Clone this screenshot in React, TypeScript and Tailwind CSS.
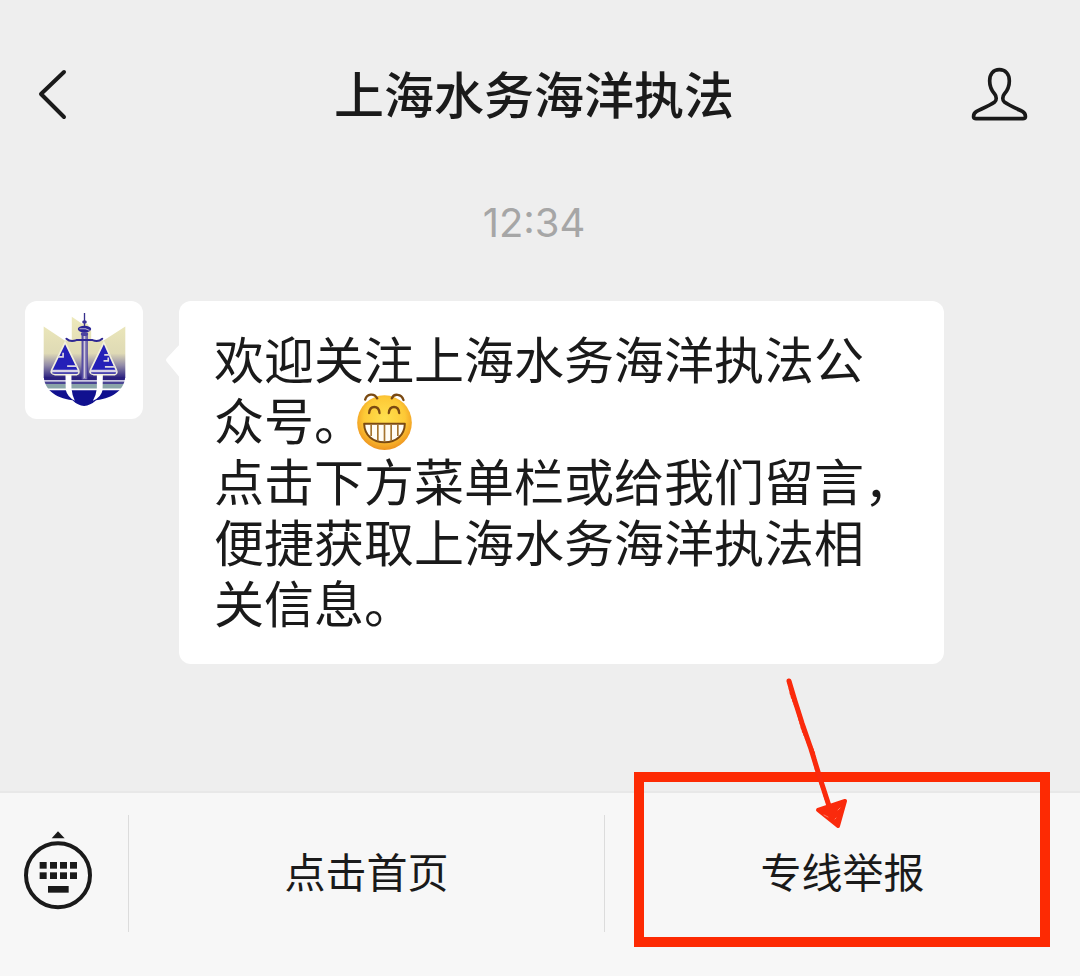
const WELCOME_LINES = [
  "欢迎关注上海水务海洋执法公",
  "众号。",
  "点击下方菜单栏或给我们留言，",
  "便捷获取上海水务海洋执法相",
  "关信息。",
];

function BackIcon() {
  return (
    <svg className="h-[52px] w-[30px]" viewBox="0 0 30 52" fill="none" stroke="#1a1a1a" strokeWidth="4" strokeLinecap="round" strokeLinejoin="round">
      <path d="M26 4 L3 26 L26 49" />
    </svg>
  );
}

function PersonIcon() {
  return (
    <svg className="h-[56px] w-[60px]" viewBox="60 48 180 168" fill="none" stroke="#1a1a1a" strokeWidth="11" strokeLinejoin="round">
      <path d="M148 59 C130 59 119 72 119 93 C119 111 125 122 134 132 C139 138 141 151 134 156 C120 166 96 176 80 184 C71 189 70 195 71 202 Q72 206 78 206 H219 Q225 206 226 202 C227 195 226 189 217 184 C200 176 177 166 163 156 C156 151 158 138 163 132 C172 122 178 111 178 93 C178 72 166 59 148 59 Z" />
    </svg>
  );
}

function KeyboardIcon() {
  return (
    <svg className="h-20 w-[70px]" viewBox="69 150 210 240" fill="#1a1a1a">
      <path d="M155 175 L174 154 L194 175 Z" />
      <circle cx="174" cy="286" r="96" fill="none" stroke="#1a1a1a" strokeWidth="12" />
      {[119, 150, 180, 210].map((x) => (
        <g key={x}>
          <rect x={x} y="246" width="21" height="20" />
          <rect x={x} y="277" width="21" height="20" />
        </g>
      ))}
      <rect x="144" y="318" width="62" height="20" />
    </svg>
  );
}

function GrinEmoji() {
  return (
    <svg className="mb-2 -ml-2 inline-block h-[58px] w-[57px] align-middle" viewBox="48 36 170 174" role="img" aria-label="呲牙">
      <defs>
        <radialGradient id="face" cx="0.5" cy="0.42" r="0.58">
          <stop offset="0" stopColor="#ffe04f" />
          <stop offset="0.65" stopColor="#fdc936" />
          <stop offset="1" stopColor="#ee941f" />
        </radialGradient>
      </defs>
      <circle cx="133" cy="125" r="82" fill="url(#face)" />
      <g fill="none" stroke="#7b4a12" strokeWidth="7" strokeLinecap="round">
        <path d="M75 56 C80 38 102 35 111 52" />
        <path d="M155 52 C161 36 184 38 190 57" />
        <path d="M87 96 C89 72 116 72 118 96" />
        <path d="M146 96 C148 72 175 72 177 96" />
      </g>
      <path d="M72 128 H194 C193 162 169 184 133 184 C97 184 73 162 72 128 Z" fill="#fffdf5" stroke="#7b4a12" strokeWidth="6" strokeLinejoin="round" />
      <path d="M93 130 V165 M113 130 V179 M133 130 V182 M153 130 V179 M173 130 V165" stroke="#a5752e" strokeWidth="5" />
    </svg>
  );
}

function Emblem() {
  return (
    <svg className="h-[97px] w-[87px]" viewBox="125 90 260 290" role="img" aria-label="上海水务海洋执法">
      <defs>
        <linearGradient id="shield" x1="0" y1="0" x2="0" y2="1">
          <stop offset="0" stopColor="#eeeabb" />
          <stop offset="0.6" stopColor="#dfdab5" />
          <stop offset="0.8" stopColor="#9089a8" />
          <stop offset="1" stopColor="#2b2080" />
        </linearGradient>
        <clipPath id="hull">
          <path d="M133 284 H377 C376 322 345 350 290 357 Q272 373 254 374 Q235 373 219 357 C165 350 134 322 133 284 Z" />
        </clipPath>
      </defs>
      <path d="M133 136 L196 178 L217 176 V107 L248 128 H264 L275 150 V176 L312 178 L377 136 V290 H133 Z" fill="url(#shield)" />
      <g clipPath="url(#hull)">
        <path d="M133 288 H377 V297 H133 Z" fill="#2b2080" />
        <path d="M133 301 H377 V308 H133 Z" fill="#4a4494" />
        <path d="M133 308 H377 V322 H133 Z" fill="#8aa5a8" />
        <path d="M133 327 H377 V376 H133 Z" fill="#10108f" />
      </g>
      {/* tusks under the two pans */}
      <path d="M198 278 H216 V322 Q218 342 226 358 Q204 347 199 326 Z" fill="#fff" />
      <path d="M310 278 H292 V322 Q290 342 280 358 Q305 348 309 326 Z" fill="#fff" />
      {/* pans */}
      <path d="M197 184 L157 266 Q152 277 166 280 H232 Q241 277 237 266 Z" fill="#2420b8" stroke="#f3f0dc" strokeWidth="5" />
      <path d="M313 184 L273 266 Q268 277 282 280 H346 Q355 277 350 266 Z" fill="#2420b8" stroke="#f3f0dc" strokeWidth="5" />
      <path d="M157 270 H237 M273 270 H351" stroke="#d8d3e6" strokeWidth="8" />
      <path d="M159 275 H236 M275 275 H348" stroke="#4038a0" strokeWidth="3" />
      <path d="M176 227 H191 V215 M203 255 H233 M314 221 H332 M312 239 H326 V229 M316 257 H347" fill="none" stroke="#dcd7df" strokeWidth="5" />
      {/* tower and beam */}
      <path d="M247 155 H263 V294 H247 Z" fill="#8d84b9" />
      <path d="M248 155 V294 M263 155 V294" stroke="#3b329b" strokeWidth="3" />
      <path d="M255 160 V290" stroke="#d1cbdc" strokeWidth="3" />
      <path d="M255 96 V136" stroke="#37308c" strokeWidth="4" />
      <ellipse cx="255" cy="123" rx="7" ry="5" fill="#3a3294" />
      <ellipse cx="255" cy="144" rx="20" ry="10" fill="#2b2596" />
      <path d="M240 143 H258 L270 148" fill="none" stroke="#bcb5d8" strokeWidth="3" />
      <ellipse cx="255" cy="159" rx="11" ry="6" fill="#4c43a1" />
      <path d="M201 173 Q213 184 231 177 H279 Q296 184 308 173" fill="none" stroke="#2e2793" strokeWidth="6" strokeLinecap="round" />
    </svg>
  );
}

function Arrow() {
  return (
    <svg className="pointer-events-none absolute -top-[139px] left-[175px] h-[156px] w-[72px]" viewBox="0 0 72 156" fill="none" stroke="#fa2a0c" strokeLinecap="round" strokeLinejoin="round">
      <path d="M9 5 L15 25 L22 47 L31 73 L39 99 L50 133" strokeWidth="5" />
      <path d="M9 5 L12 19 L18 34 L23 53 L33 77 L37 94 L49 130" strokeWidth="4" strokeDasharray="1 3" />
      <path d="M38 134 L65 125 L58 150 Z" fill="#fa2a0c" strokeWidth="4" />
      <path d="M44 139 L48 141 M58 134 L60 132 M55 143 L56 142" stroke="#ff7c62" strokeWidth="1" />
    </svg>
  );
}

export default function App() {
  return (
    <div className="flex min-h-screen flex-col bg-[#eeeeee] font-['Inter','Noto_Sans_CJK_SC',sans-serif] text-[#1a1a1a]">
      <header className="grid grid-cols-[1fr_auto_1fr] items-start pt-14 pr-[50px] pl-[38px]">
        <button type="button" aria-label="返回" className="flex h-[76px] items-center justify-self-start">
          <BackIcon />
        </button>
        <h1 className="text-[50px] leading-[80px] font-medium">上海水务海洋执法</h1>
        <button type="button" aria-label="公众号资料" className="flex h-[76px] items-center justify-self-end">
          <PersonIcon />
        </button>
      </header>

      <main className="flex-1">
        <p className="mt-[67px] pr-[50px] pl-[38px] text-center text-[40px] leading-10 text-[#a6a6a6]">12:34</p>

        <div className="mt-[58px] flex items-start gap-9 pr-[136px] pl-[25px]">
          <div className="flex size-[118px] shrink-0 items-center justify-center rounded-xl bg-white pb-0.5">
            <Emblem />
          </div>
          <div className="relative min-w-0 flex-1 rounded-xl bg-white px-[35px] pt-[30px] pb-7">
            <svg className="absolute top-[42px] -left-[14px] h-9 w-4" viewBox="0 0 16 36" fill="#fff">
              <path d="M16 0 L2 15 Q0 17 2 19 L16 36 Z" />
            </svg>
            <p className="text-[50px] leading-[61px] whitespace-nowrap">
              {WELCOME_LINES.map((line, i) => (
                <span key={line} className="block h-[61px]">
                  {line}
                  {i === 1 && <GrinEmoji />}
                </span>
              ))}
            </p>
          </div>
        </div>
      </main>

      <footer className="flex border-t-2 border-[#e8e8e8] bg-[#f7f7f7] pt-[22px] pb-11">
        <button type="button" aria-label="切换键盘" className="flex w-32 shrink-0 items-center pb-2 pl-[23px]">
          <KeyboardIcon />
        </button>
        <button type="button" className="h-[117px] flex-1 border-l border-[#dcdcdc] text-[41px]">
          点击首页
        </button>
        <div className="relative flex flex-1 border-l border-[#dcdcdc]">
          <button type="button" className="flex-1 text-[41px]">
            专线举报
          </button>
          {/* callout round the report entry */}
          <div className="pointer-events-none absolute -top-[43px] right-[30px] -bottom-[15px] left-[29px] border-10 border-[#fd2a03]" />
          <Arrow />
        </div>
      </footer>
    </div>
  );
}
